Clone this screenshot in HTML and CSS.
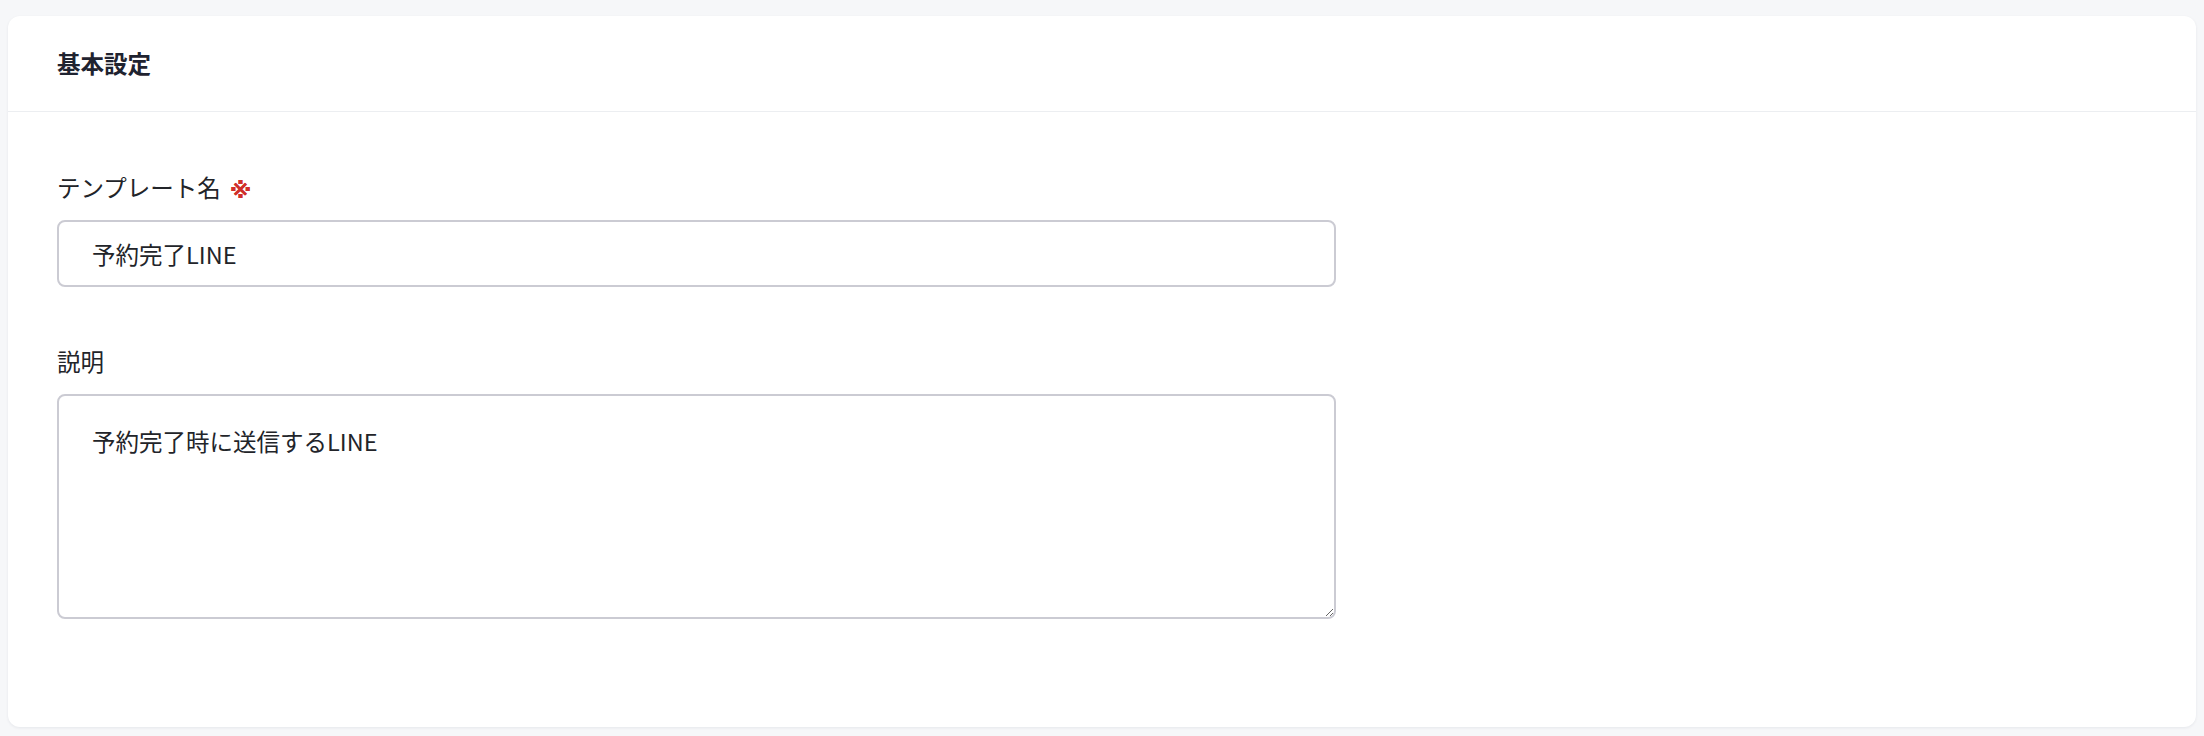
FILE: index.html
```html
<!DOCTYPE html>
<html lang="ja">
<head>
<meta charset="utf-8">
<title>基本設定</title>
<link rel="stylesheet" href="styles.css">
</head>
<body>
<div class="page">
  <section class="card">
    <header class="card-header">
      <h2 class="card-title">基本設定</h2>
    </header>
    <div class="card-body">
      <div class="field">
        <label class="label" for="name">テンプレート名<span class="req">※</span></label>
        <input id="name" class="input" type="text" value="予約完了LINE">
      </div>
      <div class="field field-2">
        <label class="label" for="desc">説明</label>
        <textarea id="desc" class="textarea">予約完了時に送信するLINE</textarea>
      </div>
    </div>
  </section>
</div>
</body>
</html>
```
FILE: styles.css
```css
* { box-sizing: border-box; }
html, body { margin: 0; padding: 0; }
body {
  background: #f6f7f9;
  font-family: "Noto Sans CJK JP", "Noto Sans", sans-serif;
  color: #222429;
  width: 2204px;
  height: 736px;
  overflow: hidden;
}
.page {
  padding: 16px 8px 9px 8px;
}
.card {
  background: #fff;
  border-radius: 12px;
  box-shadow: 0 1px 3px rgba(20, 30, 50, 0.07);
  height: 711px;
}
.card-header {
  height: 96px;
  border-bottom: 1px solid #eceef1;
  display: flex;
  align-items: center;
  padding-left: 49px;
}
.card-title {
  margin: 0;
  font-size: 23.5px;
  font-weight: 700;
  color: #1f2330;
  line-height: 1.5;
}
.card-body {
  padding: 59px 49px 0 49px;
}
.field {
  display: flex;
  flex-direction: column;
  gap: 16px;
}
.field-2 { margin-top: 58px; }
.label {
  font-size: 23.5px;
  line-height: 33px;
  height: 33px;
  color: #222429;
  display: flex;
  align-items: center;
}
.req {
  color: #d0302a;
  font-family: "DejaVu Sans", "Noto Sans CJK JP", sans-serif;
  font-size: 22px;
  line-height: 1;
  font-weight: 700;
  margin-left: 9px;
  transform: translateY(3px);
  text-shadow: 0.3px 0 0 #d0302a;
}
.input, .textarea {
  width: 1279px;
  border: 2px solid #cbcbd3;
  border-radius: 8px;
  font-family: "Noto Sans CJK JP", "Noto Sans", sans-serif;
  font-size: 23.5px;
  color: #222429;
  background: #fff;
  outline: none;
}
.input {
  height: 67px;
  padding: 0 33px;
}
.textarea {
  height: 225px;
  padding: 29px 33px;
  line-height: 33px;
  resize: vertical;
  display: block;
}
```
